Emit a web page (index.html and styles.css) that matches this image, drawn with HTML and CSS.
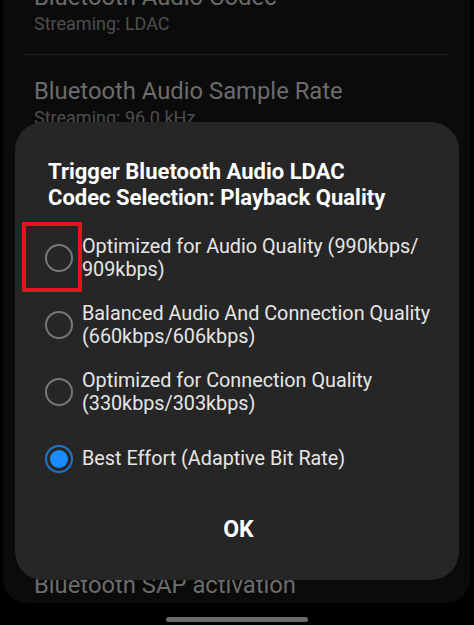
FILE: index.html
```html
<!DOCTYPE html>
<html lang="en">
<head>
  <meta charset="UTF-8" />
  <meta name="viewport" content="width=device-width, initial-scale=1.0"/>
  <title>Developer options</title>
  <link rel="stylesheet" href="styles.css">
</head>
<body>
  <div class="screen">
    <div class="list">
      <div class="item">
        <p class="item-title">Bluetooth Audio Codec</p>
        <p class="item-sub">Streaming: LDAC</p>
      </div>
      <div class="divider"></div>
      <div class="item">
        <p class="item-title">Bluetooth Audio Sample Rate</p>
        <p class="item-sub">Streaming: 96.0 kHz</p>
      </div>
      <div class="divider"></div>
      <div class="item">
        <p class="item-title">Bluetooth Audio Bits Per Sample</p>
        <p class="item-sub">Streaming: 24 bits/sample</p>
      </div>
      <div class="item">
        <p class="item-title">Bluetooth Audio Channel Mode</p>
        <p class="item-sub">Streaming: Stereo</p>
      </div>
      <div class="item">
        <p class="item-title">Bluetooth Audio LDAC Codec</p>
        <p class="item-sub">Best Effort (Adaptive Bit Rate)</p>
      </div>
      <div class="divider"></div>
      <div class="item">
        <p class="item-title">Maximum connected devices</p>
        <p class="item-sub">Use System Default: 5</p>
      </div>
      <div class="divider"></div>
      <div class="item item-last">
        <p class="item-title">Bluetooth SAP activation</p>
      </div>
    </div>

    <div class="dialog">
      <h2 class="dialog-title">Trigger Bluetooth Audio LDAC<br>Codec Selection: Playback Quality</h2>
      <div class="options">
        <div class="option">
          <span class="radio">
            <span class="mark"></span>
          </span>
          <span class="label">Optimized for Audio Quality (990kbps/<br>909kbps)</span>
        </div>
        <div class="option">
          <span class="radio"></span>
          <span class="label">Balanced Audio And Connection Quality<br>(660kbps/606kbps)</span>
        </div>
        <div class="option">
          <span class="radio"></span>
          <span class="label">Optimized for Connection Quality<br>(330kbps/303kbps)</span>
        </div>
        <div class="option">
          <span class="radio checked"><span class="dot"></span></span>
          <span class="label">Best Effort (Adaptive Bit Rate)</span>
        </div>
      </div>
      <button class="btn-ok">OK</button>
    </div>
  </div>
  <div class="home-bar"></div>
</body>
</html>
```

FILE: styles.css
```css
body {
  margin: 0;
  background-color: #000;
  font-family: Roboto, "Liberation Sans", sans-serif;
  width: 474px;
  height: 625px;
  overflow: hidden;
}
p {
  margin: 0;
}

.screen {
  position: relative;
  height: 603px;
  margin: 0 4px 0 3px;
  background-color: #0b0b0b;
  border-radius: 0 0 24px 24px;
  overflow: hidden;
}

.list {
  margin-top: -39px;
  padding: 0 22px;
}
.item {
  padding: 22px 9px 18px;
}
.item-title {
  font-size: 23.8px;
  line-height: 28px;
  color: #6c6c6c;
  white-space: nowrap;
}
.item-sub {
  margin-top: 2px;
  font-size: 18px;
  line-height: 22px;
  color: #4e4e4e;
  white-space: nowrap;
}
.item-last {
  margin-top: 28px;
}
.divider {
  height: 1px;
  margin: 1px 0 0;
  background-color: #202020;
}

/* dialog lies over the list */
.dialog {
  position: absolute;
  left: 12px;
  top: 122px;
  width: 444px;
  height: 458px;
  box-sizing: border-box;
  padding: 37px 30px 0 33px;
  background-color: #262626;
  border-radius: 28px;
  display: flex;
  flex-direction: column;
}
.dialog-title {
  margin: 0;
  font-size: 22px;
  line-height: 26px;
  font-weight: bold;
  color: #fff;
  white-space: nowrap;
}
.options {
  margin: 13px 0 0 -3px;
}
.option {
  display: flex;
  align-items: center;
  gap: 9px;
  min-height: 67px;
}
.label {
  font-size: 19.8px;
  line-height: 23px;
  color: #e6e6e6;
  white-space: nowrap;
}
.radio {
  position: relative;
  flex: none;
  width: 28px;
  height: 28px;
  box-sizing: border-box;
  border: 2px solid #777;
  border-radius: 50%;
  display: flex;
  align-items: center;
  justify-content: center;
}
.radio.checked {
  border-color: #1f74cc;
}
.dot {
  width: 18px;
  height: 18px;
  border-radius: 50%;
  background-color: #1a8cff;
}
/* red highlight drawn over the first radio */
.mark {
  position: absolute;
  left: -25px;
  top: -24px;
  width: 60px;
  height: 70px;
  box-sizing: border-box;
  border: 4px solid #e3141c;
}

.btn-ok {
  align-self: center;
  margin-top: 12px;
  height: 50px;
  padding: 0 20px;
  background: none;
  border: none;
  font-family: Roboto, "Liberation Sans", sans-serif;
  font-size: 23px;
  font-weight: bold;
  color: #fff;
}

.home-bar {
  width: 142px;
  height: 5px;
  margin: 14px auto 0;
  background-color: #6b6b6b;
  border-radius: 3px;
}
```
